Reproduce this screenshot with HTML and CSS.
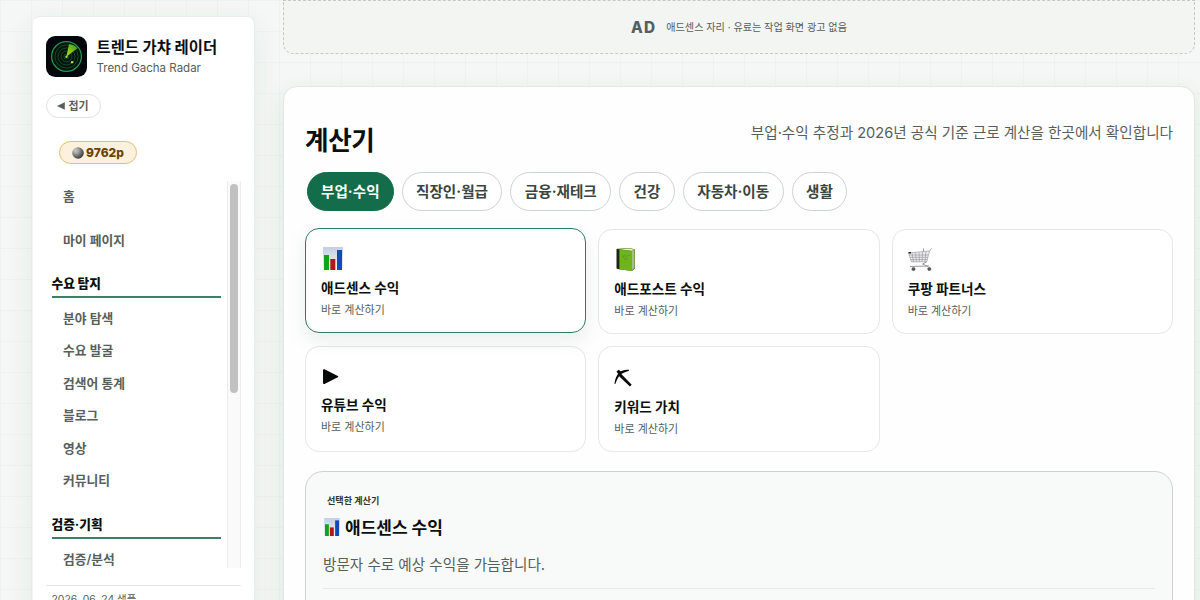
FILE: index.html
```html
<!DOCTYPE html>
<html lang="ko">
<head>
    <meta charset="UTF-8">
    <meta name="viewport" content="width=device-width, initial-scale=1.0">
    <title>트렌드 가챠 레이더</title>
    <link rel="stylesheet" href="styles.css">
</head>
<body>

<div class="app">
    <aside class="sidebar">
        <div class="brand">
            <svg class="brand-logo" viewBox="0 0 40 40">
                <defs>
                    <linearGradient id="sweep" x1="0" y1="1" x2="1" y2="0">
                        <stop offset="0" stop-color="#b5e61d"/>
                        <stop offset="1" stop-color="#3f8f1c"/>
                    </linearGradient>
                </defs>
                <rect width="40" height="40" rx="9" fill="#03070c"/>
                <circle cx="20" cy="20" r="14.5" fill="#04140d" stroke="#1f9a52" stroke-width="1.2"/>
                <g fill="none" stroke="#13582f" stroke-width=".8">
                    <circle cx="20" cy="20" r="11.3"/>
                    <circle cx="20" cy="20" r="8.3"/>
                    <circle cx="20" cy="20" r="5.3"/>
                    <circle cx="20" cy="20" r="2.5"/>
                </g>
                <path d="M20 20 22.5 7.8A12.6 12.6 0 0 1 30.8 12Z" fill="url(#sweep)"/>
                <circle cx="20" cy="20.3" r="1.2" fill="#9be22d"/>
                <circle cx="25.5" cy="25.5" r="1.2" fill="#b9e24a"/>
            </svg>
            <div class="brand-text">
                <strong>트렌드 가챠 레이더</strong>
                <span>Trend Gacha Radar</span>
            </div>
        </div>

        <button class="fold-btn">
            <svg viewBox="0 0 8 8"><path d="M7.8.2v7.6L0 4z" fill="#56605b"/></svg>
            접기
        </button>

        <div class="points">
            <svg viewBox="0 0 12 12">
                <defs>
                    <radialGradient id="coin" cx=".32" cy=".3" r=".8">
                        <stop offset="0" stop-color="#d6d6d6"/>
                        <stop offset=".45" stop-color="#858585"/>
                        <stop offset="1" stop-color="#2e2e2e"/>
                    </radialGradient>
                </defs>
                <circle cx="6" cy="6" r="5.8" fill="url(#coin)"/>
                <path d="M4 2.5 7.5 2 6 5.5 3 7z" fill="#a9a9a9" opacity=".6"/>
            </svg>
            9762p
        </div>

        <div class="nav-wrap">
            <nav class="nav">
                <a class="nav-top">홈</a>
                <a class="nav-top">마이 페이지</a>
                <h3>수요 탐지</h3>
                <a>분야 탐색</a>
                <a>수요 발굴</a>
                <a>검색어 통계</a>
                <a>블로그</a>
                <a>영상</a>
                <a>커뮤니티</a>
                <h3>검증·기획</h3>
                <a>검증/분석</a>
            </nav>
            <div class="scrollbar"><div class="thumb"></div></div>
        </div>

        <div class="side-foot">2026. 06. 24 샘플</div>
    </aside>

    <main class="main">
        <div class="ad">
            <b>AD</b>
            <span>애드센스 자리 · 유료는 작업 화면 광고 없음</span>
        </div>

        <section class="panel">
            <header class="panel-head">
                <h1>계산기</h1>
                <p>부업·수익 추정과 2026년 공식 기준 근로 계산을 한곳에서 확인합니다</p>
            </header>

            <div class="chips">
                <button class="chip active">부업·수익</button>
                <button class="chip">직장인·월급</button>
                <button class="chip">금융·재테크</button>
                <button class="chip">건강</button>
                <button class="chip">자동차·이동</button>
                <button class="chip">생활</button>
            </div>

            <div class="cards">
                <div class="card selected">
                    <svg class="icon" viewBox="0 0 24 24">
                        <defs>
                            <linearGradient id="paper" x1="0" y1="0" x2="0" y2="1">
                                <stop offset="0" stop-color="#c3cfe3"/>
                                <stop offset="1" stop-color="#f2f5fa"/>
                            </linearGradient>
                        </defs>
                        <g id="chart">
                            <rect x="2" y="0" width="20" height="23" fill="url(#paper)"/>
                            <rect x="3" y="8" width="5" height="15" fill="#12a31c"/>
                            <rect x="9.3" y="12" width="5" height="11" fill="#b8141c"/>
                            <rect x="16" y="3" width="5" height="20" fill="#124bb5"/>
                        </g>
                    </svg>
                    <h4>애드센스 수익</h4>
                    <p>바로 계산하기</p>
                </div>
                <div class="card">
                    <svg class="icon" viewBox="0 0 24 24">
                        <path d="M3 .8 16 0l5 1.600v19L18 23 3 21z" fill="#4b7d14"/>
                        <path d="M6 1.300 16 .6l4.600 1.300-2.800.8z" fill="#eef0e4"/>
                        <path d="M18 3l2.500-1v18L18 22z" fill="#a9bd8a"/>
                        <path d="M5.300 1.400 18 3v20L5.300 21.200z" fill="#6fb31d"/>
                        <path d="M2.500.9l2.800.5v19.800l-2.800-.6z" fill="#1c2612"/>
                        <path d="M8.500 6.800l1 3 1-3M12 7.300v2.300M13.700 7.500h1.800M10 11h4" fill="none" stroke="#55901a" stroke-width=".6"/>
                    </svg>
                    <h4>애드포스트 수익</h4>
                    <p>바로 계산하기</p>
                </div>
                <div class="card">
                    <svg class="icon" viewBox="0 0 24 24" fill="none" stroke="#8e8e93" stroke-width=".6">
                        <path d="M24 .3l-2 1.500-3.400 12H3.500L.5 5l20.500-2" fill="#ededf0"/>
                        <path d="M1 7h19M2 9.300h17.800M2.700 11.600h16.800M4 5l1.500 9M7.500 4.700l1 9M11 4.400l.5 9M14.500 4l-.4 9.500M18 3.500l-1 10"/>
                        <path d="M15.500.5v3M18.500 14l-4 2 5.500 2.500M2 18.500l19-.5" stroke-width=".9"/>
                        <path d="M.5 4.700h2.500" stroke="#222" stroke-width="1.500"/>
                        <circle cx="5.500" cy="21" r="1.600" fill="#56565a" stroke="#444"/>
                        <circle cx="21.300" cy="21" r="1.600" fill="#56565a" stroke="#444"/>
                    </svg>
                    <h4>쿠팡 파트너스</h4>
                    <p>바로 계산하기</p>
                </div>
                <div class="card">
                    <svg class="icon icon-play" viewBox="0 0 24 22">
                        <path d="M3.500 3.300 16.800 9.900q1.200.7 0 1.400L3.500 17.900q-1.500.5-1.500-1V4.300q0-1.500 1.500-1z" fill="#060a08"/>
                    </svg>
                    <h4>유튜브 수익</h4>
                    <p>바로 계산하기</p>
                </div>
                <div class="card">
                    <svg class="icon" viewBox="0 0 24 24" fill="#060a08">
                        <path d="M14.600 3.800C8.500 3.200 2 6 .5 17.500c0 .6.700.7.9.2C2.800 14 3.800 12 5.100 10.200L15.900 20.500l1.800-1.800L7.300 8C9.300 6.700 11 6 14.600 4.900c.7-.2.600-1 0-1.100z"/>
                        <path d="M2.500 5.400l2.300-1.700 3.200 2.900-2.800 2.800z"/>
                    </svg>
                    <h4>키워드 가치</h4>
                    <p>바로 계산하기</p>
                </div>
            </div>

            <div class="detail">
                <small>선택한 계산기</small>
                <h2>
                    <svg viewBox="2 0 20 23"><use href="#chart"/></svg>
                    애드센스 수익
                </h2>
                <p>방문자 수로 예상 수익을 가늠합니다.</p>
            </div>
        </section>
    </main>
</div>

</body>
</html>
```
FILE: styles.css
```css
* {
    box-sizing: border-box;
}

body {
    margin: 0;
    height: 600px;
    overflow: hidden;
    font-family: Inter, "Noto Sans CJK KR", sans-serif;
    color: #0b0f0d;
    background-color: #f4f7f5;
    background-image:
        linear-gradient(rgba(20, 108, 75, 0.028) 1px, transparent 1px),
        linear-gradient(90deg, rgba(20, 108, 75, 0.028) 1px, transparent 1px);
    background-size: 31px 31px;
}

h1, h2, h3, h4, p {
    margin: 0;
}

button {
    font-family: inherit;
    background: #fff;
}

.app {
    display: flex;
    gap: 28px;
    height: 600px;
    padding: 0 5px 0 32px;
}

/* sidebar */
.sidebar {
    display: flex;
    flex-direction: column;
    width: 223px;
    height: 640px;
    margin-top: 16px;
    padding: 19px 13px 0 13px;
    background: #fff;
    border: 1px solid #e9eeeb;
    border-left-color: #f3f5f4;
    border-radius: 8px;
    box-shadow: 0 8px 28px rgba(20, 70, 50, 0.07);
    flex: none;
}

.brand {
    display: flex;
    align-items: center;
    gap: 10px;
    height: 41px;
    margin-left: -0.5px;
}

.brand-logo {
    width: 41px;
    height: 41px;
    flex: none;
}

.brand-text {
    display: flex;
    flex-direction: column;
    padding-top: 1px;
    white-space: nowrap;
}

.brand-text strong {
    font-size: 15.4px;
    line-height: 22px;
}

.brand-text span {
    font-size: 11.5px;
    line-height: 18px;
    color: #56605b;
}

.fold-btn {
    display: flex;
    align-items: center;
    justify-content: center;
    gap: 3px;
    width: 55px;
    height: 24px;
    margin: 17px 0 0 -0.5px;
    padding: 0 0 2px;
    border: 1px solid #dfe5e2;
    border-radius: 12px;
    font-size: 10.9px;
    font-weight: 700;
    color: #56605b;
}

.fold-btn svg {
    width: 8px;
    height: 8px;
    margin-top: 1px;
}

.points {
    display: flex;
    align-items: center;
    justify-content: center;
    gap: 2px;
    width: 78px;
    height: 23px;
    margin: 23px 0 0 13px;
    border: 1px solid #e3bf74;
    border-radius: 12px;
    background: #fbf1dc;
    font-size: 12px;
    font-weight: 800;
    color: #6b4305;
}

.points svg {
    width: 12px;
    height: 12px;
}

.nav-wrap {
    display: flex;
    justify-content: space-between;
    height: 387px;
    margin-top: 17px;
    overflow: hidden;
}

.nav {
    width: 175px;
    padding-left: 5.5px;
}

.nav a {
    display: block;
    height: 32.4px;
    padding-left: 11.5px;
    font-size: 12.75px;
    line-height: 32.8px;
    font-weight: 600;
    color: #56605b;
}

.nav a.nav-top {
    height: 44px;
    line-height: 32px;
}

.nav h3 {
    height: 29px;
    margin-bottom: 5px;
    border-bottom: 2px solid #3b8166;
    font-size: 12.7px;
    line-height: 29px;
    font-weight: 800;
}

.nav a + h3 {
    margin-top: 13px;
}

.nav a.nav-top + h3 {
    margin-top: 0;
}

.scrollbar {
    width: 14px;
    padding: 3px 2px;
    background: #fafafa;
    border: 1px solid #ececec;
    border-width: 0 1px;
}

.thumb {
    width: 8px;
    height: 209px;
    border-radius: 4px;
    background: #c1c1c1;
}

.side-foot {
    margin: 17px 0 0;
    padding: 5px 5.5px 0;
    border-top: 1px solid #e3e8e5;
    font-size: 10.4px;
    line-height: 18px;
    color: #56605b;
}

/* main column */
.main {
    flex: 1;
    min-width: 0;
}

.ad {
    display: flex;
    align-items: center;
    justify-content: center;
    gap: 10px;
    height: 54px;
    border: 1px dashed #c3cac6;
    border-radius: 0 0 10px 10px;
    background: #f2f5f2;
    color: #56605b;
}

.ad b {
    font-size: 15.3px;
    font-weight: 800;
    letter-spacing: 1.2px;
}

.ad span {
    padding-bottom: 2px;
    font-size: 10.1px;
}

.panel {
    height: 700px;
    margin-top: 32px;
    padding: 31px 21px 0;
    background: #fefefe;
    border: 1px solid #dfe8e3;
    border-radius: 14px;
    box-shadow: 0 8px 24px rgba(20, 90, 60, 0.09);
}

.panel-head {
    display: flex;
    justify-content: space-between;
    height: 54px;
}

.panel-head h1 {
    font-size: 25.6px;
    line-height: 46px;
    font-weight: 700;
    letter-spacing: -0.4px;
}

.panel-head p {
    font-size: 14.6px;
    line-height: 30px;
    color: #56605b;
}

.chips {
    display: flex;
    gap: 8px;
    padding-left: 2px;
}

.chip {
    height: 39px;
    padding: 0 13.4px 2px;
    border: 1px solid #cdd4d0;
    border-radius: 20px;
    font-size: 14.6px;
    font-weight: 700;
    color: #3b4540;
    white-space: nowrap;
}

.chip.active {
    padding: 0 13px 2px;
    background: #136c4a;
    border-color: #136c4a;
    color: #fff;
}

.cards {
    display: grid;
    grid-template-columns: repeat(3, 1fr);
    gap: 12px;
    margin-top: 17.5px;
}

.card {
    height: 105.5px;
    padding: 18.5px 15px 0;
    background: #fff;
    border: 1px solid #e4e8e6;
    border-radius: 14px;
}

.card.selected {
    border-color: #2f7d60;
    box-shadow: 0 8px 20px rgba(20, 90, 60, 0.09);
    transform: translateY(-1px);
}

.icon {
    display: block;
    width: 24px;
    height: 24px;
}

.icon-play {
    height: 22px;
}

.card h4 {
    margin-top: 6px;
    font-size: 13.6px;
    line-height: 22px;
    font-weight: 700;
}

.card p {
    margin-top: 1px;
    font-size: 11px;
    line-height: 20px;
    color: #56605b;
}

.detail {
    height: 300px;
    margin-top: 19.5px;
    padding: 19px 17px 0;
    background: #f7faf8;
    border: 1px solid #ccd3cf;
    border-radius: 18px;
}

.detail small {
    display: block;
    padding-left: 4px;
    font-size: 9.1px;
    line-height: 20px;
    font-weight: 700;
    color: #2f3834;
}

.detail h2 {
    display: flex;
    align-items: center;
    gap: 5px;
    height: 30px;
    font-size: 17px;
    font-weight: 700;
}

.detail h2 svg {
    width: 16px;
    height: 18px;
    margin: 1px 0 0 1px;
}

.detail p {
    height: 48px;
    padding-top: 9px;
    border-bottom: 1px solid #e6ebe8;
    font-size: 14.6px;
    line-height: 30px;
    color: #56605b;
}
```
